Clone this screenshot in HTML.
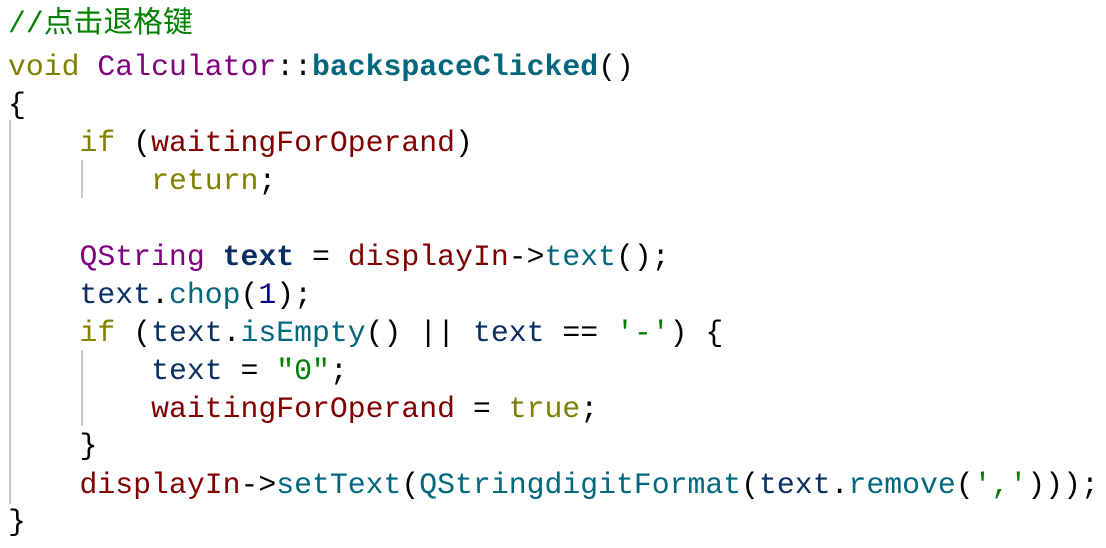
<!DOCTYPE html>
<html><head><meta charset="utf-8"><style>
body{margin:0;width:1106px;height:548px;background:#fff;position:relative;overflow:hidden;font-family:"Liberation Mono","Noto Sans CJK SC",monospace;font-size:29.8px;}
.l{position:absolute;left:8px;white-space:pre;line-height:38px;height:38px;color:#000}
.c{color:#008000}.k{color:#808000}.t{color:#800080}.f{color:#00677c}.b{font-weight:bold}
.m{color:#800000}.v{color:#092e64}.n{color:#000080}.s{color:#008000}
.g{position:absolute;width:2px;background:#c8c8c8}
</style></head><body>
<div class="g" style="left:9px;top:120px;height:384px"></div>
<div class="g" style="left:81px;top:160px;height:38px"></div>
<div class="g" style="left:81px;top:350px;height:76px"></div>
<div class="l c" style="top:5px">//点击退格键</div>
<div class="l" style="top:48px"><span class="k">void</span> <span class="t">Calculator</span>::<span class="f b">backspaceClicked</span>()</div>
<div class="l" style="top:86px">{</div>
<div class="l" style="top:124px">    <span class="k">if</span> (<span class="m">waitingForOperand</span>)</div>
<div class="l" style="top:162px">        <span class="k">return</span>;</div>
<div class="l" style="top:238px">    <span class="t">QString</span> <span class="v b">text</span> = <span class="m">displayIn</span>-&gt;<span class="f">text</span>();</div>
<div class="l" style="top:276px">    <span class="v">text</span>.<span class="f">chop</span>(<span class="n">1</span>);</div>
<div class="l" style="top:314px">    <span class="k">if</span> (<span class="v">text</span>.<span class="f">isEmpty</span>() || <span class="v">text</span> == <span class="s">'-'</span>) {</div>
<div class="l" style="top:352px">        <span class="v">text</span> = <span class="s">"0"</span>;</div>
<div class="l" style="top:390px">        <span class="m">waitingForOperand</span> = <span class="k">true</span>;</div>
<div class="l" style="top:427px">    }</div>
<div class="l" style="top:466px">    <span class="m">displayIn</span>-&gt;<span class="f">setText</span>(<span class="f">QStringdigitFormat</span>(<span class="v">text</span>.<span class="f">remove</span>(<span class="s">','</span>)));</div>
<div class="l" style="top:503px">}</div>
</body></html>
